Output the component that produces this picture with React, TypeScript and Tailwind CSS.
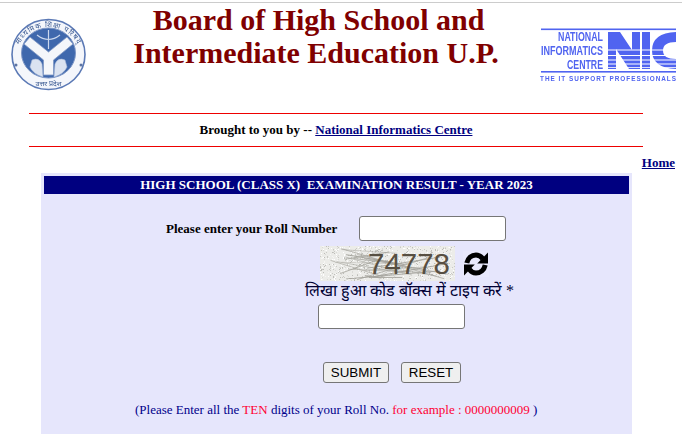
import React from "react";

const serif = "font-['Liberation_Serif',serif]";
const sans = "font-['Liberation_Sans',sans-serif]";

function UpLogo() {
  return (
    <svg width="78" height="74" viewBox="0 0 78 74" className="blur-[0.4px]">
      <ellipse cx="38.5" cy="36.5" rx="36.5" ry="35" fill="#f4f6fb" stroke="#5b79b5" strokeWidth="1.6" />
      <ellipse cx="38.5" cy="35" rx="27" ry="25" fill="#3f68ad" stroke="#7d96c6" />
      <path d="M22 42 q7 -3 10 4 l1 13 q-10 -3 -13 -10 Z M55 42 q-7 -3 -10 4 l-1 13 q10 -3 13 -10 Z" fill="#dbe3f1" stroke="#a9bbda" strokeWidth="0.6" />
      <path d="M14 26 L20 19 L38.5 34 L57 19 L63 26 L43.5 42 L43.5 57 L33.5 57 L33.5 42 Z" fill="#f4f6fa" stroke="#7f97c4" strokeWidth="0.8" />
      <path d="M38.5 12 v19 M27 17 q11.5 9 23 0" stroke="#cbd8ee" strokeWidth="1.2" fill="none" />
      <path id="uparc" d="M5.5 42 A33 33 0 0 1 71.5 42" fill="none" />
      <text fontSize="7.2" letterSpacing="1" textAnchor="middle" fill="#35558f" fontFamily="'Noto Sans','DejaVu Sans',sans-serif">
        <textPath href="#uparc" startOffset="50%">माध्यमिक शिक्षा परिषद्</textPath>
      </text>
      <text x="38.5" y="67.5" textAnchor="middle" fontSize="7" fill="#35558f" fontFamily="'Noto Sans','DejaVu Sans',sans-serif">उत्तर प्रदेश</text>
      <circle cx="6" cy="47" r="1.5" fill="#5d74a3" />
      <circle cx="71" cy="47" r="1.5" fill="#5d74a3" />
    </svg>
  );
}

function NicLogo() {
  const blue = "#5064f0";
  return (
    <svg width="138" height="56" viewBox="0 0 138 56" className="blur-[0.3px]">
      <rect x="1" y="0.5" width="135" height="1.6" fill={blue} />
      <rect x="1" y="43" width="135" height="1.6" fill={blue} />
      <g fill={blue} fontFamily="'Liberation Sans',sans-serif" fontWeight="700" textAnchor="end">
        <text x="63" y="13" fontSize="12.5" textLength="45" lengthAdjust="spacingAndGlyphs">NATIONAL</text>
        <text x="63" y="27" fontSize="12.5" textLength="62" lengthAdjust="spacingAndGlyphs">INFORMATICS</text>
        <text x="63" y="41" fontSize="12.5" textLength="36" lengthAdjust="spacingAndGlyphs">CENTRE</text>
      </g>
      <path d="M68 4 H80 L92 22 V4 H100 V41 H89 L76 21 V41 H68 Z" fill={blue} />
      <rect x="102" y="4" width="8" height="37" fill={blue} />
      <path d="M136 4 Q112 5 112 22.5 Q112 40 136 41 V31 Q123 31 123 22.5 Q123 14 136 14 Z" fill={blue} />
      <g fill="#ffffff">
        <rect x="66" y="21.5" width="72" height="1" />
        <rect x="66" y="27" width="72" height="1" />
        <rect x="66" y="31.5" width="72" height="1" />
        <rect x="66" y="35.5" width="72" height="1" />
        <rect x="66" y="39" width="72" height="0.8" />
      </g>
      <text x="0" y="53" fontSize="6.4" fontWeight="700" fill={blue} fontFamily="'Liberation Sans',sans-serif" textLength="136">THE IT SUPPORT PROFESSIONALS</text>
    </svg>
  );
}

function rng(seed: number) {
  let s = seed;
  return () => {
    s = (s * 16807) % 2147483647;
    return s / 2147483647;
  };
}

const r = rng(7331);
const specks = Array.from({ length: 900 }, () => ({
  x: Math.floor(r() * 135),
  y: Math.floor(r() * 35),
  c: ["#c9c9c4", "#dadad6", "#ffffff", "#f6f6f4", "#bdbdb8"][Math.floor(r() * 5)],
}));
const fan = Array.from({ length: 24 }, () => [
  8 + r() * 50,
  2 + r() * 32,
  50 + r() * 84,
  1 + r() * 32,
  0.4 + r() * 0.6,
]);

function Captcha() {
  return (
    <svg width="135" height="35" viewBox="0 0 135 35" className="block">
      <rect width="135" height="35" fill="#ecece9" />
      {specks.map((s, i) => (
        <rect key={i} x={s.x} y={s.y} width="1" height="1" fill={s.c} />
      ))}
      {fan.map(([a, b, c, d, w], i) => (
        <line key={i} x1={a} y1={b} x2={c} y2={d} stroke="#a3a29b" strokeWidth={w} />
      ))}
      <text x="48" y="28" fontSize="30" fill="#574f42" fontFamily="'Liberation Sans',sans-serif" textLength="82" lengthAdjust="spacingAndGlyphs">74778</text>
    </svg>
  );
}

function Refresh() {
  return (
    <svg width="26" height="26" viewBox="0 0 26 26" className="block">
      <g>
        <path d="M3.8 12 C4.8 7 8.6 3.9 13 3.9 C16 3.9 18 5.2 19.8 7.8" fill="none" stroke="#000" strokeWidth="5" />
        <path d="M25 1.5 V12.5 H14.2 Z" fill="#000" />
      </g>
      <g transform="rotate(180 13 13)">
        <path d="M3.8 12 C4.8 7 8.6 3.9 13 3.9 C16 3.9 18 5.2 19.8 7.8" fill="none" stroke="#000" strokeWidth="5" />
        <path d="M25 1.5 V12.5 H14.2 Z" fill="#000" />
      </g>
    </svg>
  );
}

export default function App() {
  return (
    <div className={`w-[682px] h-[448px] overflow-hidden bg-white ${serif}`}>
      <div className="h-[3px] border-b border-[#cccccc]" />
      <div className="flex h-[110px]">
        <div className="w-[130px] pl-[10px] pt-[15px] shrink-0">
          <UpLogo />
        </div>
        <div className="w-[372px] text-center text-[30px] leading-[33px] font-bold text-[#800000] whitespace-nowrap">
          <div className="pl-[5px]">Board of High School and</div>
          <div>Intermediate Education U.P.</div>
        </div>
        <div className="pl-[38px] pt-[25px]">
          <NicLogo />
        </div>
      </div>
      <div className="mx-[29px] w-[614px] border-t border-[#ee0000]" />
      <div className="mx-[29px] w-[614px] h-[32px] flex items-center justify-center text-[13px] font-bold text-black">
        <span className="whitespace-pre">Brought to you by -- </span>
        <a className="underline text-[#000080]">National Informatics Centre</a>
      </div>
      <div className="mx-[29px] w-[614px] border-t border-[#ee0000]" />
      <div className="flex justify-end pr-[7px] h-[26px] items-center pt-[5px]">
        <a className="underline text-[13px] font-bold text-[#000080]">Home</a>
      </div>
      <div className="ml-[41px] w-[591px] h-[261px] bg-[#e6e6fc] p-[3px]">
        <div className="h-[18px] bg-[#000080] text-white text-[13px] font-bold flex items-center justify-center whitespace-pre">
          HIGH SCHOOL (CLASS X)  EXAMINATION RESULT - YEAR 2023
        </div>
        <div className="flex items-center mt-[22px] h-[25px]">
          <span className="ml-[122px] w-[193px] text-[13px] font-bold text-black whitespace-nowrap">Please enter your Roll Number</span>
          <div className="w-[147px] h-[25px] bg-white border border-[#767676] rounded-[3px]" />
        </div>
        <div className="flex items-center mt-[5px] ml-[276px] gap-[8px]">
          <Captcha />
          <div className="w-[26px] h-[26px] bg-[#e9e9fc]">
            <Refresh />
          </div>
        </div>
        <div className="mt-px ml-[261px] text-[16px] leading-[18px] text-[#000033] whitespace-nowrap font-['Liberation_Serif',serif]">
          लिखा हुआ कोड बॉक्स में टाइप करें *
        </div>
        <div className="mt-[4px] ml-[274px] w-[147px] h-[25px] bg-white border border-[#767676] rounded-[3px]" />
        <div className={`flex mt-[33px] ml-[279px] gap-[12px] ${sans} text-[13.33px] text-black`}>
          <button className="w-[66px] h-[21px] bg-[#efefef] border border-[#767676] rounded-[3px] flex items-center justify-center">SUBMIT</button>
          <button className="w-[60px] h-[21px] bg-[#efefef] border border-[#767676] rounded-[3px] flex items-center justify-center">RESET</button>
        </div>
        <div className="mt-[19px] ml-[91px] text-[13px] leading-[15px] text-[#00008b] whitespace-pre">
          (Please Enter all the <span className="text-[#ff0033]">TEN</span> digits of your Roll No. <span className="text-[#ff0033]">for example : 0000000009</span> )
        </div>
      </div>
    </div>
  );
}
